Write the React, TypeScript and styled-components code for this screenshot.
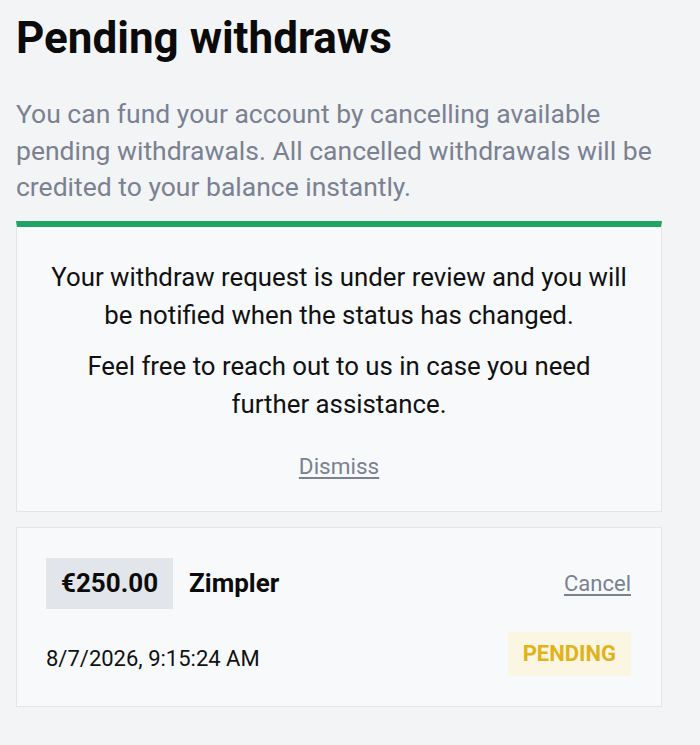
import styled, { createGlobalStyle } from 'styled-components';

const GlobalStyle = createGlobalStyle`
  body {
    margin: 0;
    background: #f3f4f6;
    font-family: Roboto, "Liberation Sans", sans-serif;
  }
`;

const Page = styled.div`
  width: 646px;
  padding: 12px 16px 36px;
`;

const Title = styled.h1`
  margin: 0 0 32px;
  font-size: 44px;
  font-weight: 700;
  line-height: 52px;
  color: #0b0b0b;
`;

const Intro = styled.p`
  margin: 0 0 15px;
  font-size: 26.5px;
  line-height: 36.5px;
  color: #7a8191;
`;

const Notice = styled.div`
  background: #f8f9fb;
  border: 1px solid #e3e5e9;
  border-top: 6px solid #21a366;
  padding: 31px 30px 31px;
  text-align: center;
  color: #111;
  font-size: 25.8px;
  line-height: 38px;
  margin-bottom: 15px;
`;

const NoticeText = styled.p`
  margin: 0 0 13px;
`;

const LinkButton = styled.button<{ $size?: number }>`
  background: none;
  border: none;
  padding: 0;
  font-family: inherit;
  font-size: ${(p) => p.$size ?? 22.5}px;
  color: #7a8191;
  text-decoration: underline;
  text-underline-offset: 3px;
  cursor: pointer;
`;

const DismissRow = styled.div`
  margin-top: 27px;
  line-height: 30px;
`;

const Item = styled.div`
  background: #f8f9fb;
  border: 1px solid #e3e5e9;
  padding: 30px 30px 30px 29px;
  display: flex;
  flex-direction: column;
  gap: 23px;
`;

const Row = styled.div<{ $align?: string }>`
  display: flex;
  align-items: ${(p) => p.$align ?? 'center'};
  justify-content: space-between;
`;

const Left = styled.div`
  display: flex;
  align-items: center;
  gap: 16px;
`;

const Amount = styled.span`
  background: #e2e5ea;
  padding: 0 15px;
  height: 51px;
  display: inline-flex;
  align-items: center;
  font-size: 26px;
  font-weight: 700;
  color: #0b0b0b;
`;

const Method = styled.span`
  font-size: 26px;
  font-weight: 700;
  color: #0b0b0b;
`;

const DateText = styled.span`
  font-size: 22px;
  line-height: 26px;
  color: #111;
  padding-bottom: 4px;
`;

const Status = styled.span`
  background: #fbf6e1;
  color: #e2b21b;
  font-weight: 700;
  font-size: 22px;
  text-transform: uppercase;
  height: 44px;
  padding: 0 15px;
  display: inline-flex;
  align-items: center;
`;

export default function App() {
  return (
    <>
      <GlobalStyle />
      <Page>
        <Title>Pending withdraws</Title>
        <Intro>
          You can fund your account by cancelling available pending withdrawals. All
          cancelled withdrawals will be credited to your balance instantly.
        </Intro>
        <Notice>
          <NoticeText>
            Your withdraw request is under review and you will be notified when the
            status has changed.
          </NoticeText>
          <NoticeText>
            Feel free to reach out to us in case you need further assistance.
          </NoticeText>
          <DismissRow>
            <LinkButton>Dismiss</LinkButton>
          </DismissRow>
        </Notice>
        <Item>
          <Row>
            <Left>
              <Amount>€250.00</Amount>
              <Method>Zimpler</Method>
            </Left>
            <LinkButton $size={22}>Cancel</LinkButton>
          </Row>
          <Row $align="flex-end">
            <DateText>8/7/2026, 9:15:24 AM</DateText>
            <Status>Pending</Status>
          </Row>
        </Item>
      </Page>
    </>
  );
}
